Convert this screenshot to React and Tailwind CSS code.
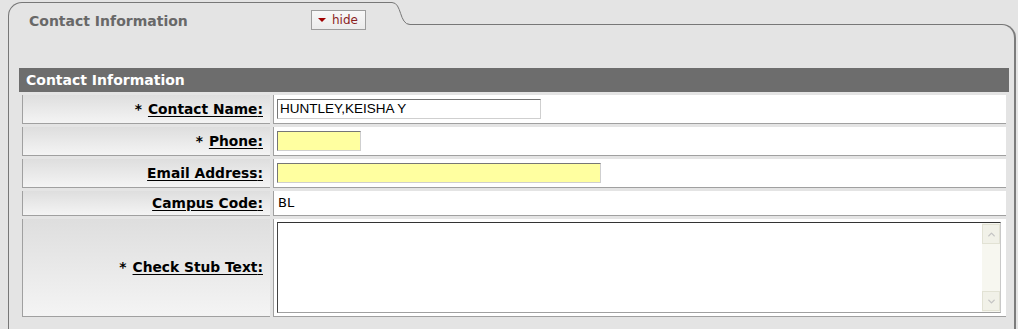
import { ChevronUp, ChevronDown } from 'lucide-react';

const rows = [
  { label: 'Contact Name', required: true, h: 'h-[29px]', field: 'name' },
  { label: 'Phone', required: true, h: 'h-[29px]', field: 'phone' },
  { label: 'Email Address', required: false, h: 'h-[29px]', field: 'email' },
  { label: 'Campus Code', required: false, h: 'h-[25px]', field: 'campus' },
  { label: 'Check Stub Text', required: true, h: 'h-[98px]', field: 'stub' }
];

const inputBorder =
  'border border-t-[#767676] border-l-[#767676] border-b-[#cfcfcf] border-r-[#cfcfcf]';

const Field = ({ field }) => {
  if (field === 'name') {
    return (
      <div
        className={`flex h-[20px] w-[264px] items-center bg-white pl-[2px] text-[13.5px] text-black ${inputBorder}`}
        style={{ fontFamily: '"Liberation Sans", Arial, sans-serif' }}
      >
        HUNTLEY,KEISHA Y
      </div>
    );
  }
  if (field === 'phone') {
    return <div className={`h-[20px] w-[84px] bg-[#ffffa0] ${inputBorder}`} />;
  }
  if (field === 'email') {
    return <div className={`h-[20px] w-[324px] bg-[#ffffa0] ${inputBorder}`} />;
  }
  if (field === 'campus') {
    return (
      <span className="pl-[1px] text-[13px] text-black" style={{ fontFamily: '"DejaVu Sans", Verdana, sans-serif' }}>
        BL
      </span>
    );
  }
  return (
    <div className="mt-[3px] flex h-[91px] w-[724px] border border-t-[#333333] border-l-[#444444] border-b-[#a0a0a0] border-r-[#c8c8c8] bg-white">
      <div className="flex-1" />
      <div className="flex w-[18px] flex-col justify-between bg-[#f7f7f0] py-[1px]">
        <div className="flex h-[20px] items-center justify-center border border-[#e2e2d4] bg-[#f1f1e8]">
          <ChevronUp size={11} strokeWidth={3} className="text-[#c4c4c4]" />
        </div>
        <div className="flex h-[20px] items-center justify-center border border-[#e2e2d4] bg-[#f1f1e8]">
          <ChevronDown size={11} strokeWidth={3} className="text-[#c4c4c4]" />
        </div>
      </div>
    </div>
  );
};

export default function App() {
  return (
    <div
      className="h-[329px] w-[1018px] overflow-hidden bg-[#e4e4e4] pl-[8px] pr-[2px] pt-[2px]"
      style={{ fontFamily: '"DejaVu Sans", Verdana, sans-serif' }}
    >
      {/* tab */}
      <div className="flex">
        <div className="relative z-10 -mb-px flex h-[23px] w-[384px] items-start justify-between rounded-tl-[14px] border-l border-t border-[#777777] bg-[#e4e4e4] pl-[20px] pr-[26px] pt-[7px]">
          <span className="mt-[2px] text-[14px] font-bold leading-[19px] text-[#686868]">
            Contact Information
          </span>
          <button className="flex h-[20px] w-[55px] items-center gap-[6px] border border-[#9c9c9c] bg-linear-to-b from-[#f8f8f8] to-[#ebebeb] pl-[6px]">
            <span className="h-0 w-0 border-l-[4px] border-r-[4px] border-t-[4px] border-l-transparent border-r-transparent border-t-[#a00000]" />
            <span className="text-[12px] leading-none text-[#8b1e1e]">hide</span>
          </button>
        </div>
        <svg width="18" height="23" className="relative z-10 -mb-px block">
          <path d="M0 0.5 C 10 0.5, 7 22.5, 18 22.5 L18 23 L0 23 Z" fill="#e4e4e4" />
          <path d="M0 0.5 C 10 0.5, 7 22.5, 18 22.5" fill="none" stroke="#777777" strokeWidth="1" />
        </svg>
      </div>

      {/* panel */}
      <div className="h-[320px] rounded-tr-[14px] border-l border-r-2 border-t border-[#777777] border-r-[#7c7c7c] pl-[10px] pr-[5px] pt-[43px]">
        <div className="flex h-[24px] items-center bg-[#6d6d6d] pl-[7px] text-[14px] font-bold text-white">
          Contact Information
        </div>
        <div className="flex flex-col gap-[3px] p-[3px]">
          {rows.map((row) => (
            <div key={row.label} className={`grid grid-cols-[248px_1fr] gap-[3px] ${row.h}`}>
              <div className="flex items-center justify-end border-b border-l border-[#a0a0a0] bg-linear-to-b from-[#dedede] to-[#f4f4f4] pr-[7px] text-[13.8px] font-bold text-black">
                {row.required && <span className="mr-[6px]">*</span>}
                <span className="underline underline-offset-2">{row.label}:</span>
              </div>
              <div
                className={`flex border-b border-l border-[#a0a0a0] bg-white pl-[3px] ${
                  row.field === 'stub' ? 'items-start' : 'items-center'
                }`}
              >
                <Field field={row.field} />
              </div>
            </div>
          ))}
        </div>
      </div>
    </div>
  );
}
